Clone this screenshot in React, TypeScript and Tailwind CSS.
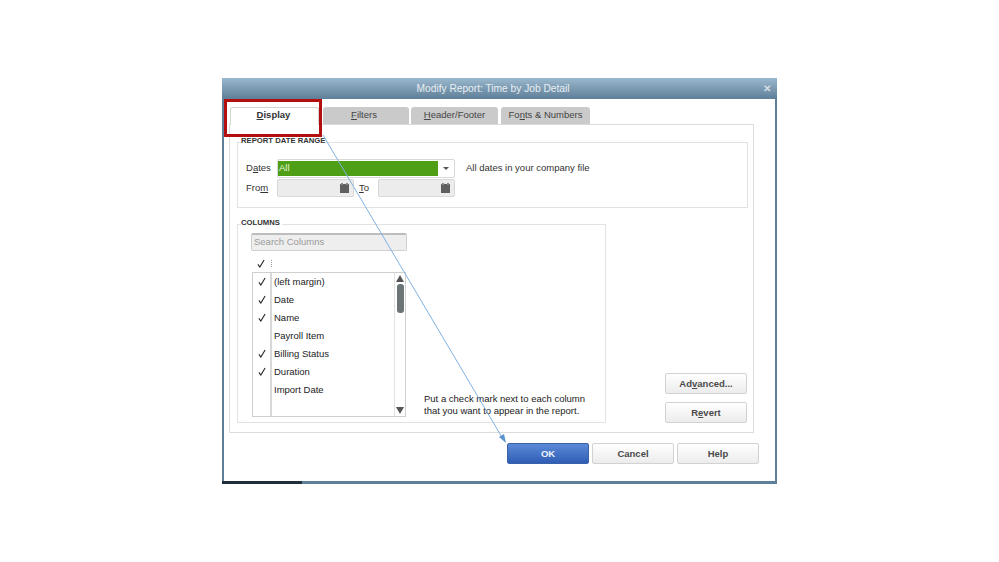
const columns = [
  { name: '(left margin)', checked: true },
  { name: 'Date', checked: true },
  { name: 'Name', checked: true },
  { name: 'Payroll Item', checked: false },
  { name: 'Billing Status', checked: true },
  { name: 'Duration', checked: true },
  { name: 'Import Date', checked: false },
];

function CalendarIcon() {
  return (
    <svg width="9" height="10" viewBox="0 0 9 10" className="block">
      <rect x="0" y="1" width="9" height="9" fill="#5f5f5f" />
      <rect x="1" y="0" width="2" height="2" fill="#8a8a8a" />
      <rect x="6" y="0" width="2" height="2" fill="#8a8a8a" />
    </svg>
  );
}

function Check() {
  return (
    <svg width="8" height="9" viewBox="0 0 9 10">
      <path d="M1 6 L3.2 9 L8 1" fill="none" stroke="#222" strokeWidth="1.2" />
    </svg>
  );
}

function Tab({ children, width, active }: { children: React.ReactNode; width: string; active?: boolean }) {
  return (
    <div
      className={`${width} flex items-center justify-center rounded-t-[3px] ${
        active ? 'h-[18px] -mb-px relative z-10 bg-white border border-b-0 border-[#d4d4d4] font-bold text-[#333]' : 'h-[17px] bg-[#cacaca] text-[#444]'
      }`}
    >
      {children}
    </div>
  );
}

function DialogButton({ children, className }: { children: React.ReactNode; className?: string }) {
  return (
    <button className={`w-[82px] h-[21px] rounded-[2px] border border-[#d2d2d2] bg-gradient-to-b from-white to-[#ececec] font-bold text-[#4a4a4a] ${className ?? ''}`}>
      {children}
    </button>
  );
}

export default function App() {
  return (
    <div className="relative w-[999px] h-[562px] overflow-hidden bg-white pt-[78px] pl-[222px] font-['Liberation_Sans',Arial,sans-serif] text-[9.5px] leading-none text-[#333]">
      <div className="relative w-[555px] h-[406px] flex flex-col border-x-2 border-b-[3px] border-[#5d7f99]">
        {/* Title bar */}
        <div className="relative -mx-[2px] h-[21px] shrink-0 flex items-center justify-center pt-px pr-[13px] bg-gradient-to-b from-[#9ab8cd] to-[#5f7f99] text-[10.2px] text-[#e8eef2]">
          Modify Report: Time by Job Detail
          <span className="absolute right-[6px] top-[6px] text-[10px] font-bold text-[#d5dde2]">✕</span>
        </div>

        <div className="flex-1 flex flex-col pl-[5px] pt-[8px]">
          {/* Tabs */}
          <div className="flex items-end h-[17px] pl-px">
            <Tab width="w-[89px]" active><span className="-ml-[2px] -mt-[3px]"><u>D</u>isplay</span></Tab>
            <div className="w-[4px]" />
            <Tab width="w-[86px]"><span className="-ml-[4px] -mt-px"><u>F</u>ilters</span></Tab>
            <div className="w-[2px]" />
            <Tab width="w-[87px]"><span className="-mt-px"><u>H</u>eader/Footer</span></Tab>
            <div className="w-[3px]" />
            <Tab width="w-[89px]"><span className="-mt-px">Fo<u>n</u>ts &amp; Numbers</span></Tab>
          </div>

          {/* Tab panel */}
          <div className="relative w-[525px] h-[309px] border border-[#dcdcdc] px-[7px] pt-[17px]">
            {/* Report date range */}
            <div className="relative w-[511px] h-[66px] border border-[#e2e2e2] pl-[8px] pt-[15px]">
              <span className="absolute left-[3px] -top-[6px] bg-white pr-[1px] text-[7.7px] font-bold text-[#333]">REPORT DATE RANGE</span>
              <div className="flex items-center h-[20px]">
                <span className="w-[31px]">D<u>a</u>tes</span>
                <div className="w-[178px] h-[19px] flex items-center border border-[#d8d8d8] rounded-[2px] pl-0 pr-px">
                  <div className="w-[160px] h-[15px] flex items-center bg-[#4f9f16] pl-px text-[#e6f3dc]">All</div>
                  <div className="flex-1 flex justify-center">
                    <div className="w-0 h-0 border-x-[3px] border-x-transparent border-t-[3px] border-t-[#555]" />
                  </div>
                </div>
                <span className="ml-[11px]">All dates in your company file</span>
              </div>
              <div className="flex items-center h-[18px] mt-px">
                <span className="w-[31px]">Fro<u>m</u></span>
                <div className="w-[77px] h-[18px] flex items-center justify-end pr-[4px] bg-[#ececec] border border-[#d8d8d8] rounded-[2px]">
                  <CalendarIcon />
                </div>
                <span className="w-[24px] pl-[5px]"><u>T</u>o</span>
                <div className="w-[77px] h-[18px] flex items-center justify-end pr-[4px] bg-[#ececec] border border-[#d8d8d8] rounded-[2px]">
                  <CalendarIcon />
                </div>
              </div>
            </div>

            {/* Columns */}
            <div className="relative w-[369px] h-[199px] mt-[16px] border border-[#e2e2e2] pl-[13px] pt-[8px]">
              <span className="absolute left-[3px] -top-[6px] bg-white pr-[2px] text-[7.7px] font-bold text-[#333]">COLUMNS</span>
              <div className="w-[156px] h-[18px] flex items-center pl-[2px] pb-[2px] bg-[#eeeeee] border border-[#d0d0d0] border-t-2 border-t-[#bdbdbd] rounded-[2px] text-[#9a9a9a]">
                Search Columns
              </div>
              <div className="flex items-center h-[21px] pl-[6px] pt-[4px]">
                <Check />
                <span className="ml-[6px] w-px h-[7px] border-l border-dotted border-[#999]" />
              </div>
              <div className="flex ml-px w-[154px] h-[145px] border border-[#cfcfcf]">
                <div className="w-[19px] border-r-2 border-[#d8d8d8] pt-px">
                  {columns.map((c) => (
                    <div key={c.name} className="h-[18px] flex items-center justify-center pb-[3px]">
                      {c.checked && <Check />}
                    </div>
                  ))}
                </div>
                <div className="flex-1 pl-[2px]">
                  {columns.map((c) => (
                    <div key={c.name} className="h-[18px] flex items-center text-[#222]">{c.name}</div>
                  ))}
                </div>
                {/* Scrollbar */}
                <div className="w-[11px] flex flex-col items-center border-l border-[#e2e2e2]">
                  <div className="mt-[2px] w-0 h-0 border-x-[4px] border-x-transparent border-b-[7px] border-b-[#555]" />
                  <div className="mt-[2px] w-[7px] h-[29px] rounded-[3px] bg-[#6d7478]" />
                  <div className="mt-auto mb-[2px] w-0 h-0 border-x-[4px] border-x-transparent border-t-[7px] border-t-[#555]" />
                </div>
              </div>
              <div className="absolute left-[186px] top-[168px] leading-[12px] text-[#222] whitespace-nowrap">
                Put a check mark next to each column
                <br />
                that you want to appear in the report.
              </div>
            </div>

            {/* Side buttons */}
            <div className="absolute right-[6px] bottom-[9px] flex flex-col gap-[8px]">
              <DialogButton><span>Ad<u>v</u>anced...</span></DialogButton>
              <DialogButton><span>R<u>e</u>vert</span></DialogButton>
            </div>
          </div>

          {/* Footer buttons */}
          <div className="flex justify-end gap-[3px] mt-[10px] pr-[16px]">
            <button className="w-[82px] h-[21px] rounded-[2px] border border-[#3a62a8] bg-gradient-to-b from-[#5b8ad8] to-[#2f5db5] font-bold text-[#eef3fb]">OK</button>
            <DialogButton>Cancel</DialogButton>
            <DialogButton>Help</DialogButton>
          </div>
        </div>

        <div className="absolute -left-[2px] -bottom-[3px] w-[80px] h-[3px] bg-[#1f2d3d]" />
      </div>

      {/* Annotation: red box */}
      <div className="absolute left-[224px] top-[99px] w-[98px] h-[38px] border-[3px] border-[#b30f0f]" />

      {/* Annotation: arrow */}
      <svg width="999" height="562" className="absolute inset-0 pointer-events-none">
        <line x1="323" y1="135" x2="503" y2="439" stroke="#7fb2e0" strokeWidth="1" />
        <polygon points="506,443 499,437 504,434" fill="#5b93cf" />
      </svg>
    </div>
  );
}
